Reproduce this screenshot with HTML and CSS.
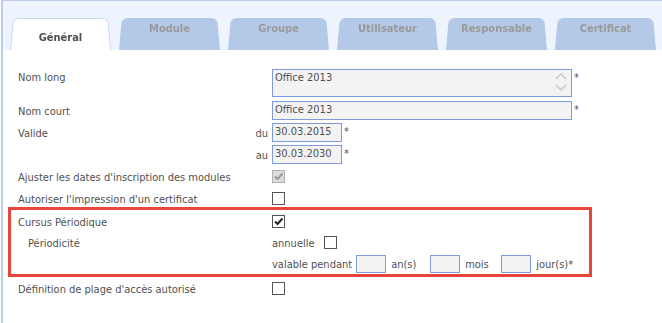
FILE: index.html
```html
<!DOCTYPE html>
<html lang="fr">
<head>
  <meta charset="UTF-8">
  <title>Cursus - Général</title>
  <link rel="stylesheet" href="styles.css">
</head>
<body>
  <div class="panel">
    <div class="tabbar">
      <div class="tab active">Général</div>
      <div class="tab">Module</div>
      <div class="tab">Groupe</div>
      <div class="tab">Utilisateur</div>
      <div class="tab">Responsable</div>
      <div class="tab">Certificat</div>
    </div>

    <div class="form">
      <div class="row row-tall">
        <div class="label">Nom long</div>
        <div class="sub"></div>
        <div class="ctrl">
          <div class="textbox">
            <span>Office 2013</span>
            <span class="arrows">
              <svg width="12" height="8" viewBox="0 0 12 8"><path d="M1 7 L6 2 L11 7" fill="none" stroke="#c8c8c8" stroke-width="1.5"/></svg>
              <svg width="12" height="8" viewBox="0 0 12 8"><path d="M1 1 L6 6 L11 1" fill="none" stroke="#c8c8c8" stroke-width="1.5"/></svg>
            </span>
          </div>
          <span class="req">*</span>
        </div>
      </div>

      <div class="row">
        <div class="label">Nom court</div>
        <div class="sub"></div>
        <div class="ctrl">
          <div class="field wide">Office 2013</div>
          <span class="req">*</span>
        </div>
      </div>

      <div class="row">
        <div class="label">Valide</div>
        <div class="sub">du</div>
        <div class="ctrl">
          <div class="field date">30.03.2015</div>
          <span class="req">*</span>
        </div>
      </div>

      <div class="row">
        <div class="label"></div>
        <div class="sub">au</div>
        <div class="ctrl">
          <div class="field date">30.03.2030</div>
          <span class="req">*</span>
        </div>
      </div>

      <div class="row">
        <div class="label">Ajuster les dates d'inscription des modules</div>
        <div class="sub"></div>
        <div class="ctrl">
          <span class="check disabled">
            <svg width="11" height="11" viewBox="0 0 11 11"><path d="M2 5.5 L4.5 8 L9.5 2.5" fill="none" stroke="#9a9a9a" stroke-width="2"/></svg>
          </span>
        </div>
      </div>

      <div class="row">
        <div class="label">Autoriser l'impression d'un certificat</div>
        <div class="sub"></div>
        <div class="ctrl"><span class="check"></span></div>
      </div>

      <div class="highlight">
        <div class="row">
          <div class="label">Cursus Périodique</div>
          <div class="sub"></div>
          <div class="ctrl">
            <span class="check">
              <svg width="11" height="11" viewBox="0 0 11 11"><path d="M2 5.5 L4.5 8 L9.5 2.5" fill="none" stroke="#222" stroke-width="2"/></svg>
            </span>
          </div>
        </div>

        <div class="row">
          <div class="label indent">Périodicité</div>
          <div class="sub"></div>
          <div class="ctrl">
            <span class="text">annuelle</span>
            <span class="check"></span>
          </div>
        </div>

        <div class="row">
          <div class="label"></div>
          <div class="sub"></div>
          <div class="ctrl">
            <span class="text">valable pendant</span>
            <div class="field tiny"></div>
            <span class="text unit">an(s)</span>
            <div class="field tiny"></div>
            <span class="text unit unit-short">mois</span>
            <div class="field tiny"></div>
            <span class="text unit">jour(s)*</span>
          </div>
        </div>
      </div>

      <div class="row">
        <div class="label">Définition de plage d'accès autorisé</div>
        <div class="sub"></div>
        <div class="ctrl"><span class="check"></span></div>
      </div>
    </div>
  </div>
</body>
</html>
```

FILE: styles.css
```css
body {
  margin: 0;
  font-family: "DejaVu Sans", Verdana, sans-serif;
  font-stretch: condensed;
  font-size: 11px;
  color: #505050;
  background-color: #ffffff;
}

.panel {
  margin-left: 1px;
  border-left: 2px solid #b9cce9;
  height: 323px;
}

/* tabs */
.tabbar {
  display: flex;
  align-items: flex-end;
  gap: 8px;
  height: 49px;
  padding-left: 7px;
  background-color: #eef4fd;
  border-top: 1px solid #b9cce9;
}

.tab {
  position: relative;
  z-index: 0;
  width: 101px;
  height: 34px;
  box-sizing: border-box;
  padding-top: 6px;
  text-align: center;
  font-weight: bold;
  color: #9a9a9a;
}

.tab::before {
  content: '';
  position: absolute;
  inset: 0;
  z-index: -1;
  background-color: #b4c8e7;
  border-radius: 6px 6px 0 0;
  transform: perspective(40px) rotateX(4deg);
  transform-origin: bottom;
}

.tab.active {
  padding-top: 15px;
  color: #505050;
}

.tab.active::before {
  background-color: #ffffff;
  border: 1px solid #c9d8ef;
  border-bottom: none;
}

/* form */
.form {
  padding: 18px 0 0 15px;
}

.row {
  display: grid;
  grid-template-columns: 232px 22px 1fr;
  align-items: center;
  min-height: 22px;
  white-space: nowrap;
}

.label,
.sub,
.text {
  padding-top: 2px;
}

.row-tall {
  align-items: start;
  height: 31px;
}

.row-tall .label {
  padding-top: 3px;
}

.sub {
  text-align: right;
  padding-right: 4px;
}

.indent {
  padding-left: 10px;
}

.ctrl {
  display: flex;
  align-items: center;
}

.row-tall .ctrl {
  align-items: flex-start;
  padding-top: 1px;
}

.req {
  align-self: flex-start;
  margin-left: 2px;
  margin-top: 2px;
}

.textbox,
.field {
  box-sizing: border-box;
  border: 1px solid #7f9be0;
  background-color: #f3f3f3;
  color: #505050;
  padding: 1px 2px;
}

.textbox {
  display: flex;
  justify-content: space-between;
  width: 300px;
  height: 28px;
}

.arrows {
  display: flex;
  flex-direction: column;
  gap: 4px;
  padding: 1px 2px 0 0;
}

.field.wide {
  width: 300px;
  height: 19px;
}

.field.date {
  width: 70px;
  height: 19px;
}

.field.tiny {
  width: 30px;
  height: 18px;
  margin-left: 4px;
}

.unit {
  width: 35px;
  margin-left: 5px;
}

.unit-short {
  width: 32px;
}

.text + .check {
  margin-left: 9px;
}

.check {
  display: inline-flex;
  align-items: center;
  justify-content: center;
  box-sizing: border-box;
  width: 13px;
  height: 13px;
  border: 1px solid #555555;
  background-color: #ffffff;
}

.check.disabled {
  border-color: #b0b0b0;
  background-color: #dcdcdc;
}

.highlight {
  width: 584px;
  box-sizing: border-box;
  margin: -2px 0 0 -10px;
  padding: 1px 0 0 7px;
  border: 3px solid #e8453c;
}

.highlight .row {
  min-height: 21px;
}
```
